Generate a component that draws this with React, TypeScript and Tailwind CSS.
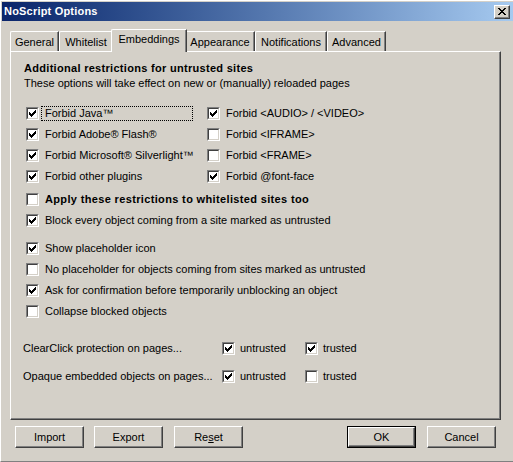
import type { ReactNode } from "react";

// classic 3D checkbox, 13x13
function Check({ on }: { on?: boolean }) {
  const tops = [2, 3, 4, 3, 2, 1, 0];
  return (
    <span className="inline-flex h-[13px] w-[13px] shrink-0 border border-t-[#808080] border-l-[#808080] border-b-white border-r-white">
      <span className="flex h-full w-full items-center justify-center border border-t-[#404040] border-l-[#404040] border-b-[#d4d0c8] border-r-[#d4d0c8] bg-white">
        {on && (
          <svg width="7" height="7" viewBox="0 0 7 7" shapeRendering="crispEdges">
            {tops.map((t, i) => (
              <rect key={i} x={i} y={t} width="1" height="3" fill="#000" />
            ))}
          </svg>
        )}
      </span>
    </span>
  );
}

function Row({
  on,
  children,
  bold,
  focus,
}: {
  on?: boolean;
  children: ReactNode;
  bold?: boolean;
  focus?: boolean;
}) {
  return (
    <div className="flex h-[21px] items-center">
      <Check on={on} />
      <span
        className={
          focus
            ? "ml-[2px] w-[152px] border border-dotted border-black px-[3px] leading-[13px] whitespace-nowrap"
            : bold
              ? "ml-[2px] border border-transparent px-[3px] font-bold tracking-[0.35px] leading-[13px] whitespace-nowrap"
              : "ml-[2px] border border-transparent px-[3px] leading-[13px] whitespace-nowrap"
        }
      >
        {children}
      </span>
    </div>
  );
}

function Button({ children, def }: { children: ReactNode; def?: boolean }) {
  const inner = (
    <div className="flex h-full w-full items-center justify-center border border-t-white border-l-white border-b-[#404040] border-r-[#404040] shadow-[inset_-1px_-1px_#808080]">
      {children}
    </div>
  );
  if (def) {
    return <div className="h-[22px] w-[69px] border border-black">{inner}</div>;
  }
  return <div className="h-[22px] w-[69px]">{inner}</div>;
}

const tabs = [
  { name: "General", w: "w-[49px]" },
  { name: "Whitelist", w: "w-[54px]" },
  { name: "Embeddings", w: "w-[76px]", active: true },
  { name: "Appearance", w: "w-[70px]" },
  { name: "Notifications", w: "w-[72px]" },
  { name: "Advanced", w: "w-[59px]" },
];

export default function App() {
  const closeRows = ["11000011", "01100110", "00111100", "00011000", "00111100", "01100110", "11000011"];

  return (
    <div className="flex h-[462px] w-[513px] flex-col overflow-hidden border-t border-l border-b border-t-white border-l-white border-b-[#808080] bg-[#d4d0c8] font-['Liberation_Sans',sans-serif] text-[11px] leading-[13px] text-black">
      {/* Title bar */}
      <div className="mt-[1px] ml-[1px] flex h-[19px] items-center justify-between bg-linear-to-r from-[#0a246a] to-[#a6caf0] pl-[2px]">
        <span className="font-bold tracking-[0.2px] text-white">NoScript Options</span>
        <div className="mr-[3px] flex h-[14px] w-[16px] items-center justify-center border border-t-white border-l-white border-b-[#404040] border-r-[#404040] bg-[#d4d0c8] shadow-[inset_-1px_-1px_#808080]">
          <svg width="8" height="7" viewBox="0 0 8 7" shapeRendering="crispEdges">
            {closeRows.map((r, y) =>
              r.split("").map((c, x) =>
                c === "1" ? <rect key={`${x}-${y}`} x={x} y={y} width="1" height="1" fill="#000" /> : null,
              ),
            )}
          </svg>
        </div>
      </div>

      {/* Tabs */}
      <div className="mt-[8px] flex h-[22px] items-end pl-[9px]">
        {tabs.map((t) =>
          t.active ? (
            <div
              key={t.name}
              className={`relative z-10 -mx-[2px] -mb-[1px] flex h-[23px] ${t.w} justify-center rounded-tl-[2px] border-t border-l border-r border-t-white border-l-white border-r-[#404040] bg-[#d4d0c8] pt-[3px] shadow-[inset_-1px_0_#808080]`}
            >
              {t.name}
            </div>
          ) : (
            <div
              key={t.name}
              className={`flex h-[20px] ${t.w} justify-center rounded-tl-[2px] border-t border-l border-r border-t-white border-l-white border-r-[#404040] pt-[4px] shadow-[inset_-1px_0_#808080]`}
            >
              {t.name}
            </div>
          ),
        )}
      </div>

      {/* Panel */}
      <div className="ml-[9px] flex h-[369px] w-[491px] flex-col border-t border-l border-r border-b border-t-white border-l-white border-r-[#404040] border-b-[#404040] shadow-[inset_-1px_-1px_#808080]">
        <div className="mt-[10px] ml-[13px] font-bold tracking-[0.3px]">Additional restrictions for untrusted sites</div>
        <div className="mt-[2px] ml-[13px]">These options will take effect on new or (manually) reloaded pages</div>

        <div className="mt-[13px] ml-[15px] grid grid-cols-[181px_auto]">
          <Row on focus>Forbid Java™</Row>
          <Row on>{"Forbid <AUDIO> / <VIDEO>"}</Row>
          <Row on>Forbid Adobe® Flash®</Row>
          <Row>{"Forbid <IFRAME>"}</Row>
          <Row on>Forbid Microsoft® Silverlight™</Row>
          <Row>{"Forbid <FRAME>"}</Row>
          <Row on>Forbid other plugins</Row>
          <Row on>Forbid @font-face</Row>
        </div>

        <div className="mt-[2px] ml-[15px]">
          <Row bold>Apply these restrictions to whitelisted sites too</Row>
          <Row on>Block every object coming from a site marked as untrusted</Row>
        </div>

        <div className="mt-[7px] ml-[15px]">
          <Row on>Show placeholder icon</Row>
          <Row>No placeholder for objects coming from sites marked as untrusted</Row>
          <Row on>Ask for confirmation before temporarily unblocking an object</Row>
          <Row>Collapse blocked objects</Row>
        </div>

        <div className="mt-[16px] ml-[12px] flex h-[21px] items-center">
          <span className="w-[199px]">ClearClick protection on pages...</span>
          <Check on />
          <span className="ml-[5px] w-[65px]">untrusted</span>
          <Check on />
          <span className="ml-[5px]">trusted</span>
        </div>
        <div className="mt-[7px] ml-[12px] flex h-[21px] items-center">
          <span className="w-[199px]">Opaque embedded objects on pages...</span>
          <Check on />
          <span className="ml-[5px] w-[65px]">untrusted</span>
          <Check />
          <span className="ml-[5px]">trusted</span>
        </div>
      </div>

      {/* Buttons */}
      <div className="mt-[6px] flex pr-[17px] pl-[14px]">
        <Button>Import</Button>
        <div className="ml-[10px]">
          <Button>Export</Button>
        </div>
        <div className="ml-[11px]">
          <Button>
            <span>
              Re<u>s</u>et
            </span>
          </Button>
        </div>
        <div className="ml-auto">
          <Button def>OK</Button>
        </div>
        <div className="ml-[11px]">
          <Button>Cancel</Button>
        </div>
      </div>
    </div>
  );
}
